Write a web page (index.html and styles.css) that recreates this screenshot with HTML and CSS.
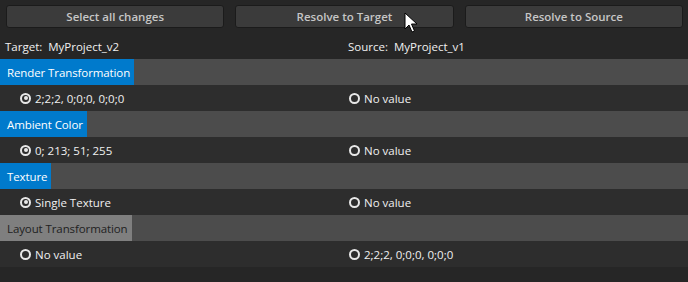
FILE: index.html
```html
<!DOCTYPE html>
<html lang="en">
<head>
    <meta charset="UTF-8">
    <title>Merge Properties</title>
    <link rel="stylesheet" href="styles.css">
</head>
<body>

<div class="toolbar">
    <button class="toolButton">Select all changes</button>
    <button class="toolButton">Resolve to Target</button>
    <button class="toolButton">Resolve to Source</button>
</div>

<div class="projects">
    <div class="col">Target:&nbsp; MyProject_v2</div>
    <div class="col">Source:&nbsp; MyProject_v1</div>
</div>

<div class="property">
    <div class="propHeader"><span class="propName">Render Transformation</span></div>
    <div class="propValues">
        <div class="col"><span class="radio checked"></span>2;2;2, 0;0;0, 0;0;0</div>
        <div class="col"><span class="radio"></span>No value</div>
    </div>
</div>

<div class="property">
    <div class="propHeader"><span class="propName">Ambient Color</span></div>
    <div class="propValues">
        <div class="col"><span class="radio checked"></span>0; 213; 51; 255</div>
        <div class="col"><span class="radio"></span>No value</div>
    </div>
</div>

<div class="property">
    <div class="propHeader"><span class="propName">Texture</span></div>
    <div class="propValues">
        <div class="col"><span class="radio checked"></span>Single Texture</div>
        <div class="col"><span class="radio"></span>No value</div>
    </div>
</div>

<div class="property">
    <div class="propHeader"><span class="propName unchanged">Layout Transformation</span></div>
    <div class="propValues">
        <div class="col"><span class="radio"></span>No value</div>
        <div class="col"><span class="radio"></span>2;2;2, 0;0;0, 0;0;0</div>
    </div>
</div>

<svg class="cursor" width="14" height="22" viewBox="0 0 14 22">
    <path d="M1 1 L1 17 L5 13 L8 20 L10.5 19 L7.5 12 L13 12 Z" fill="#ffffff" stroke="#000000" stroke-width="1"/>
</svg>

</body>
</html>
```

FILE: styles.css
```css
body {
    margin: 0;
    padding: 0;
    background-color: #262626;
    color: #f0f0f0;
    font-family: "Open Sans", "Noto Sans", sans-serif;
    font-size: 11.5px;
    position: relative;
    height: 282px;
    overflow: hidden;
}

.toolbar {
    display: flex;
    gap: 11px;
    padding: 5px 5px 0 6px;
}

.toolButton {
    flex: 1;
    height: 23px;
    background-color: #3b3b3b;
    border: 1px solid #1b1b1b;
    border-radius: 3px;
    color: #c6c6c6;
    font-family: inherit;
    font-size: 11.5px;
    font-weight: 600;
    padding: 0;
}

.projects {
    display: flex;
    height: 31px;
    align-items: center;
}

.col {
    width: 344px;
    display: flex;
    align-items: center;
    box-sizing: border-box;
}

.projects .col {
    padding-left: 5px;
    padding-top: 6px;
}

.projects .col + .col {
    padding-left: 4px;
}

.propHeader {
    height: 26px;
    background-color: #4c4c4c;
    display: flex;
}

.propName {
    background-color: #007acc;
    color: #ffffff;
    padding: 0 4px 0 7px;
    letter-spacing: -0.1px;
    display: flex;
    align-items: center;
}

.propName.unchanged {
    background-color: #7f7f7f;
    color: #1e1e1e;
}

.propValues {
    height: 26px;
    background-color: #2d2d2d;
    display: flex;
}

.propValues .col {
    padding-left: 20px;
}

.propValues .col + .col {
    padding-left: 5px;
}

.radio {
    width: 11px;
    height: 11px;
    box-sizing: border-box;
    border: 2px solid #e8e8e8;
    border-radius: 50%;
    background-color: #2d2d2d;
    margin-right: 4px;
    position: relative;
}

.radio.checked::after {
    content: "";
    position: absolute;
    left: 1.5px;
    top: 1.5px;
    width: 4px;
    height: 4px;
    border-radius: 50%;
    background-color: #e8e8e8;
}

.cursor {
    position: absolute;
    left: 404px;
    top: 12px;
}
```
